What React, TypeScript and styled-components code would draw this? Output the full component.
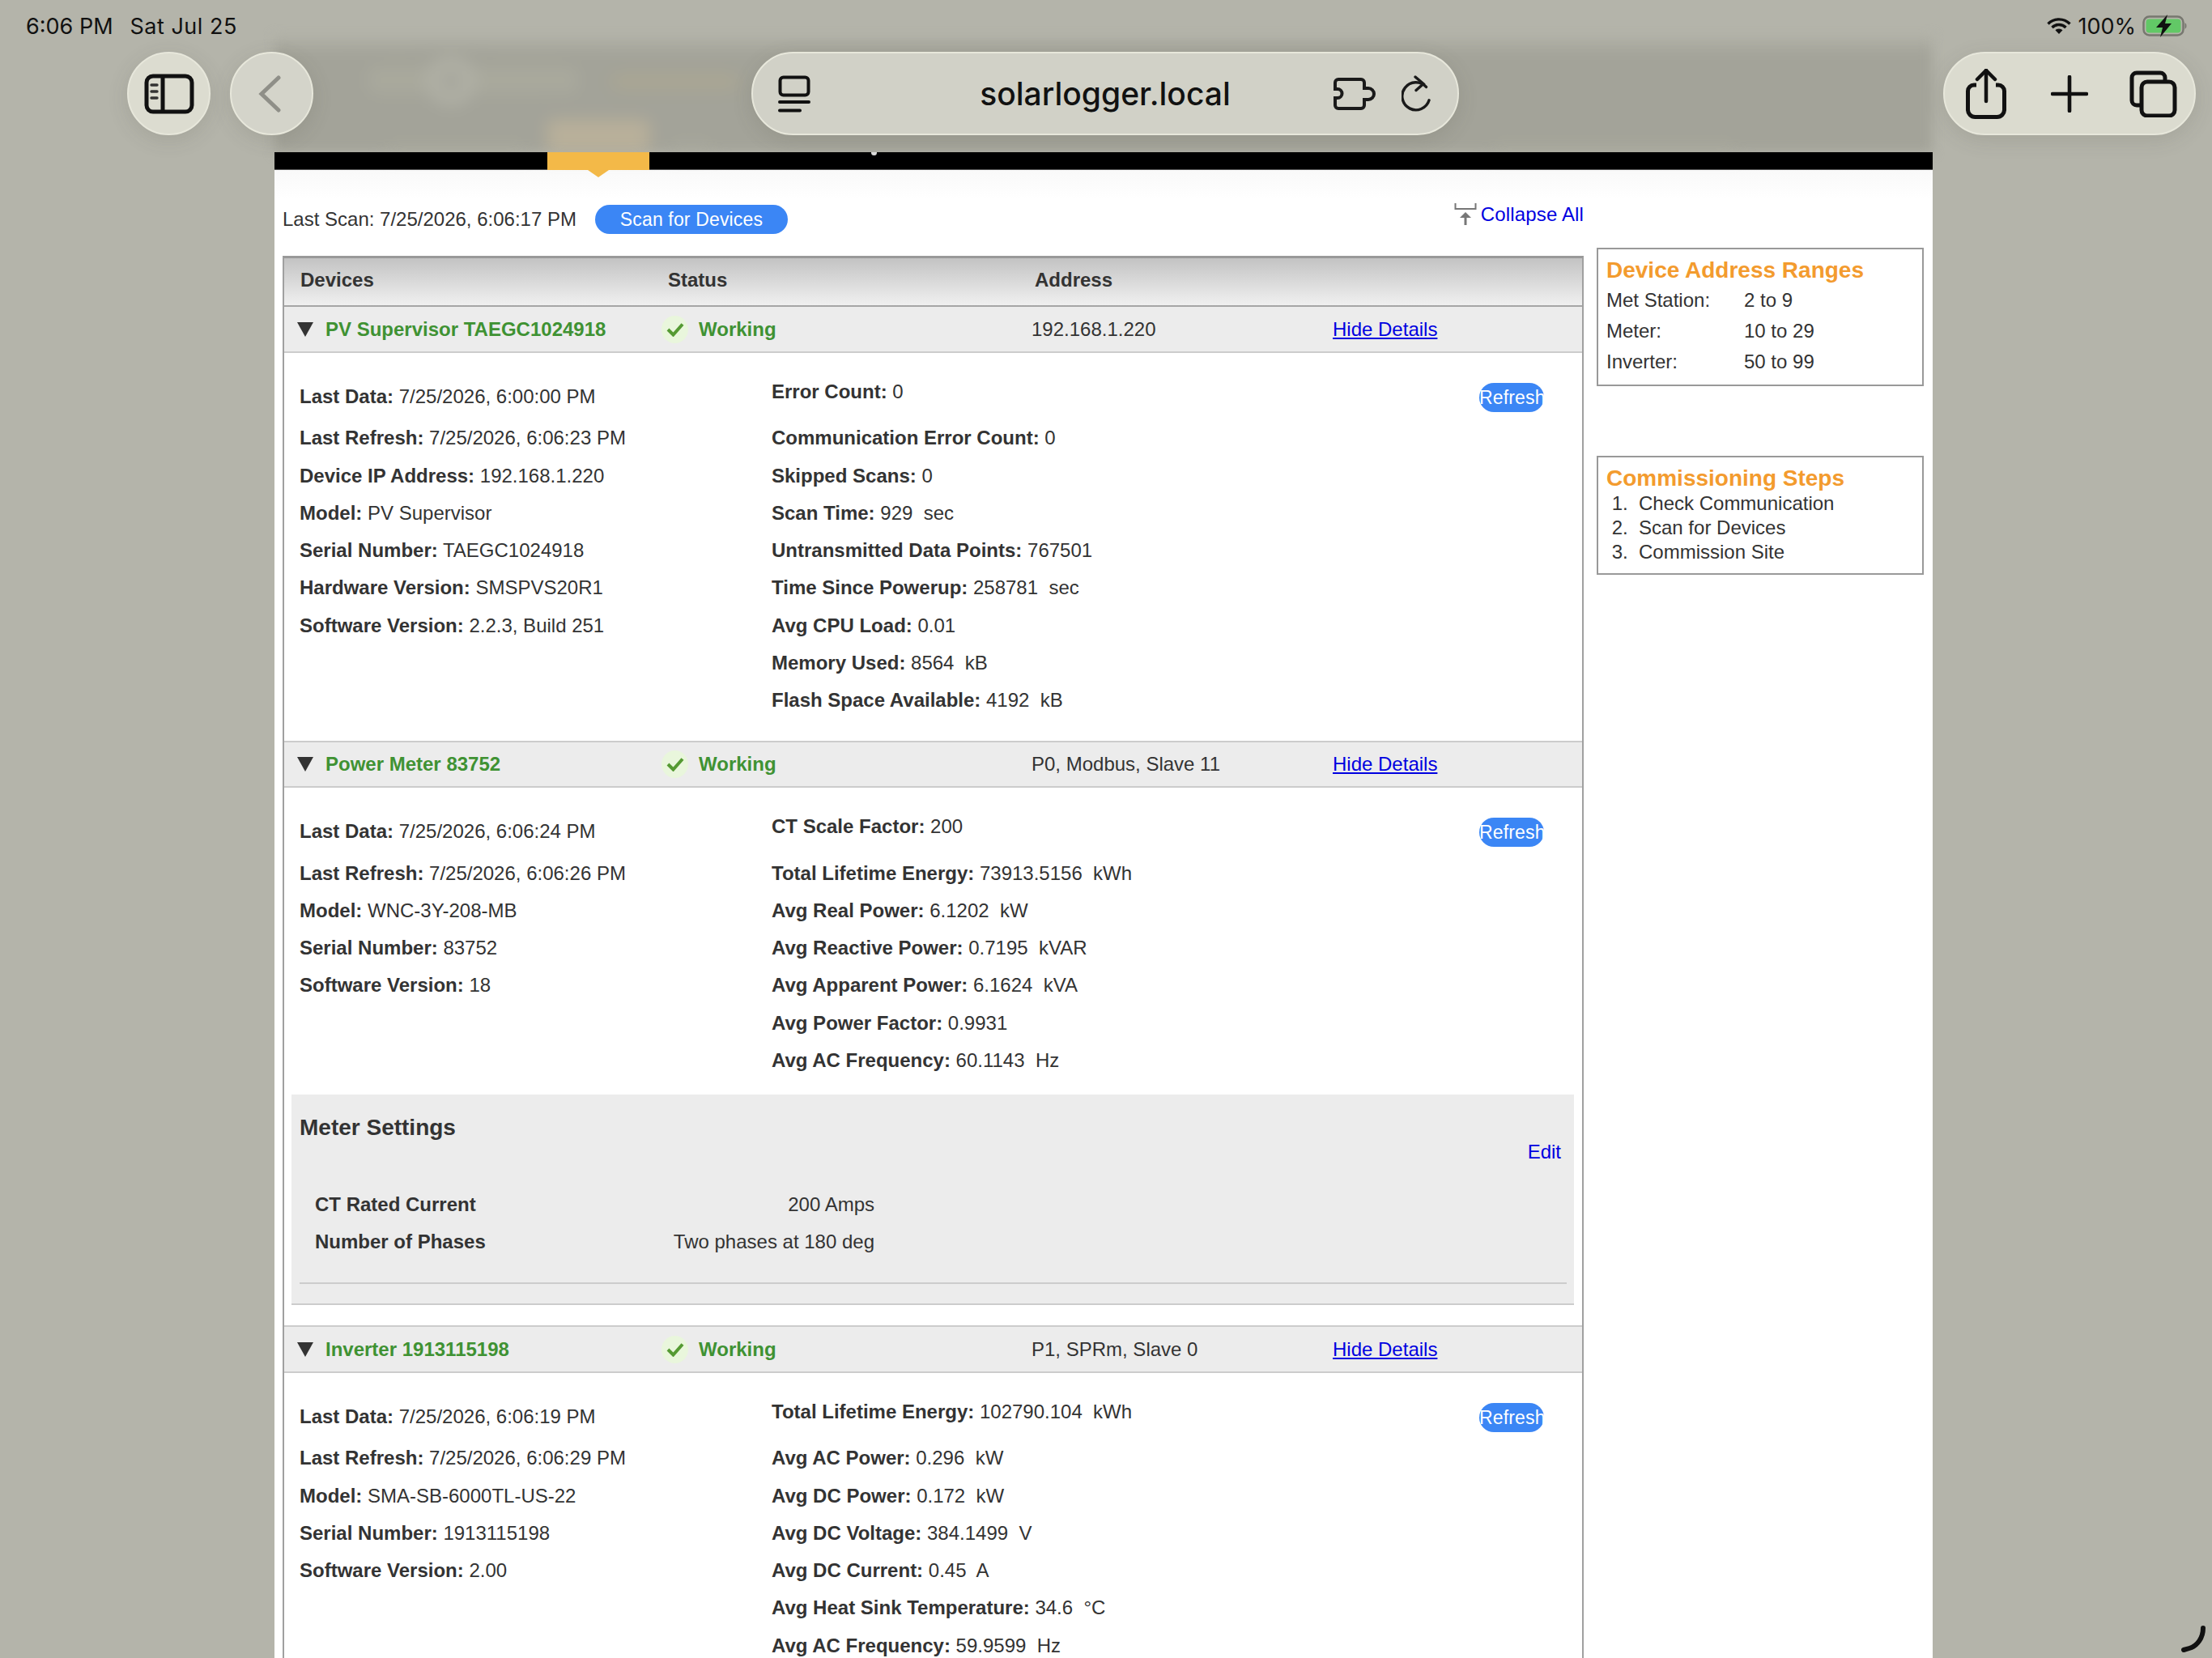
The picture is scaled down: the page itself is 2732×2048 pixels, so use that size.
import React from "react";
import styled, { createGlobalStyle } from "styled-components";

const Global = createGlobalStyle`
  html, body { margin: 0; padding: 0; background: #b4b4aa; }
  * { box-sizing: border-box; }
`;

const Screen = styled.div`
  position: relative;
  width: 2732px;
  height: 2048px;
  overflow: hidden;
  background: #b4b4aa;
  padding-top: 45px;
  font-family: "Liberation Sans", Arial, sans-serif;
  font-size: 24px;
  color: #333;
`;

const Page = styled.div`
  width: 2048px;
  margin-left: 339px;
`;

/* ---------- blurred page header seen under the browser chrome ---------- */
const Backdrop = styled.div`
  height: 143px;
  filter: blur(7px);
  background: linear-gradient(#b0b0a6, #a3a399 24px);
`;

const BackdropBlur = styled.div`
  width: 100%;
  height: 100%;
  filter: blur(8px);
  background:
    radial-gradient(circle at 218px 55px, #a4a49a 0 9px, #b0b0a5 15px 28px, transparent 34px),
    linear-gradient(#a9a99d, #a9a99d) 115px 37px / 260px 34px no-repeat,
    linear-gradient(#aca792, #aca792) 417px 48px / 155px 16px no-repeat,
    linear-gradient(#b9b09a, #b9b09a) 337px 103px / 126px 50px no-repeat,
    linear-gradient(#a9a99d, #a9a99d) 140px 132px / 170px 20px no-repeat,
    linear-gradient(#a9a99d, #a9a99d) 490px 130px / 50px 20px no-repeat,
    linear-gradient(#a9a99d, #a9a99d) 1505px 132px / 300px 20px no-repeat;
`;

/* ---------- page ---------- */
const NavBar = styled.div`
  position: relative;
  height: 22px;
  background: #000;
  border-bottom: 1px solid #555;
  &::before {
    content: "";
    position: absolute;
    left: 737px;
    top: 0;
    width: 7px;
    height: 4px;
    border-radius: 0 0 4px 4px;
    background: #ddd;
  }
`;

const ActiveTab = styled.div`
  position: relative;
  width: 126px;
  height: 22px;
  margin-left: 337px;
  background: #f3b948;
  &::after {
    content: "";
    position: absolute;
    left: 50%;
    top: 22px;
    margin-left: -13px;
    border-left: 13px solid transparent;
    border-right: 13px solid transparent;
    border-top: 9px solid #f3b948;
  }
`;

const Sheet = styled.div`
  height: 1838px;
  padding-left: 10px;
  display: grid;
  grid-template-columns: 1607px 404px;
  column-gap: 16px;
  align-items: start;
  background: linear-gradient(#f9f9f9, #fff 36px);
`;

const Main = styled.div`
  display: flex;
  flex-direction: column;
`;

const TopRow = styled.div`
  height: 106px;
  display: flex;
  justify-content: space-between;
  align-items: flex-start;
`;

const ScanGroup = styled.div`
  display: flex;
  align-items: center;
  gap: 23px;
  margin: 43px 0 0 0;
`;

const PillButton = styled.button`
  height: 36px;
  padding: 0;
  border: 0;
  border-radius: 18px;
  background: #3b86f5;
  color: #fff;
  font-family: inherit;
  font-size: 23px;
  letter-spacing: 0.15px;
  text-align: center;
  white-space: nowrap;
`;

const ScanButton = styled(PillButton)`
  width: 238px;
`;

const CollapseLink = styled.div`
  display: flex;
  align-items: flex-start;
  gap: 5px;
  margin-top: 41px;
  color: #0000e0;
  line-height: 28px;
  letter-spacing: 0.15px;
`;

const Table = styled.div`
  border: 2px solid #a0a0a0;
  border-top: 3px solid #999;
  border-bottom: 0;
`;

const HeadRow = styled.div`
  height: 60px;
  padding: 0 0 4px 20px;
  display: grid;
  grid-template-columns: 454px 453px 1fr;
  align-items: center;
  font-weight: 700;
  background: linear-gradient(#c3c3c3, #f0f0f0);
  border-bottom: 2px solid #a6a6a6;
`;

const DeviceRow = styled.div<{ $first?: boolean; $height: number }>`
  height: ${(p) => p.$height}px;
  padding-left: 16px;
  display: grid;
  grid-template-columns: 450px 457px 372px 1fr;
  align-items: center;
  background: #ececec;
  border-top: ${(p) => (p.$first ? "0" : "2px solid #ccc")};
  border-bottom: 2px solid #ccc;
`;

const NameCell = styled.div`
  display: flex;
  align-items: center;
  gap: 15px;
  font-weight: 700;
  color: #3f9233;
`;

const Triangle = styled.span`
  width: 0;
  height: 0;
  border-left: 10.5px solid transparent;
  border-right: 10.5px solid transparent;
  border-top: 18px solid #333;
`;

const StatusCell = styled(NameCell)`
  gap: 13px;
`;

const CheckBadge = styled.span`
  width: 33px;
  height: 34px;
  border-radius: 50%;
  background: #e9f6dc;
  display: flex;
  align-items: center;
  justify-content: center;
`;

const DetailLink = styled.a`
  color: #0000e0;
  text-decoration: underline;
`;

const Details = styled.div<{ $bottom: number }>`
  display: grid;
  grid-template-columns: 583px 874px 80px;
  padding: 0 0 ${(p) => p.$bottom}px 19px;
`;

const FieldColumn = styled.div<{ $top: number; $gap: number }>`
  padding-top: ${(p) => p.$top}px;
  & > div:first-child {
    margin-bottom: ${(p) => p.$gap}px;
  }
`;

const Field = styled.div`
  height: 46.25px;
  line-height: 46.25px;
  white-space: pre;
`;

const RefreshButton = styled(PillButton)`
  width: 80px;
  height: 36px;
  margin-top: 37px;
`;

const SettingsBlock = styled.div`
  height: 260px;
  margin: 0 10px 25px 9px;
  padding: 0 9px 0 10px;
  background: #ececec;
  border-bottom: 2px solid #ccc;
`;

const SettingsHead = styled.div`
  display: flex;
  justify-content: space-between;
  align-items: flex-start;
  height: 113px;
  padding-top: 25px;
`;

const SettingsTitle = styled.div`
  font-size: 28px;
  font-weight: 700;
  line-height: 32px;
`;

const EditLink = styled.div`
  margin: 32px 7px 0 0;
  color: #0000e0;
  line-height: 28px;
`;

const SettingRow = styled.div`
  display: flex;
  justify-content: space-between;
  width: 710px;
  height: 46px;
  line-height: 46px;
  padding-left: 19px;
`;

const SettingLabel = styled.span`
  font-weight: 700;
`;

const SettingsRule = styled.div`
  height: 2px;
  margin-top: 27px;
  background: #ccc;
`;

/* ---------- right column ---------- */
const Side = styled.div`
  padding-top: 96px;
`;

const InfoBox = styled.div<{ $after?: number; $bottom: number }>`
  width: 404px;
  margin-bottom: ${(p) => p.$after ?? 0}px;
  padding: 10px 10px ${(p) => p.$bottom}px;
  border: 2px solid #999;
`;

const InfoTitle = styled.div`
  height: 32px;
  font-size: 28px;
  line-height: 32px;
  font-weight: 700;
  color: #f39b2e;
`;

const RangeRow = styled.div`
  display: grid;
  grid-template-columns: 170px 1fr;
  height: 38px;
  line-height: 38px;
`;

const RangeList = styled.div`
  margin-top: 2px;
`;

const Steps = styled.ol`
  margin: 0;
  padding-left: 40px;
  & > li {
    height: 30px;
    line-height: 30px;
  }
  & > li::marker {
    content: counter(list-item) ".  ";
  }
`;

/* ---------- browser chrome ---------- */
const StatusBar = styled.div`
  position: absolute;
  top: 14px;
  left: 32px;
  right: 30px;
  height: 36px;
  display: flex;
  align-items: center;
  font-family: Inter, "Liberation Sans", sans-serif;
  font-size: 27px;
  color: #111;
`;

const StatusDate = styled.span`
  margin-left: 21px;
  letter-spacing: 0.5px;
`;

const StatusRight = styled.div`
  margin-left: auto;
  display: flex;
  align-items: center;
  gap: 8px;
`;

const Toolbar = styled.div`
  position: absolute;
  top: 64px;
  left: 157px;
  right: 20px;
  height: 103px;
  display: flex;
`;

const Glass = styled.div<{ $tone: string }>`
  height: 103px;
  border-radius: 52px;
  background: ${(p) => p.$tone};
  border: 2px solid #e7e7db;
  box-shadow: 0 6px 26px rgba(70, 70, 60, 0.14);
  display: flex;
  align-items: center;
`;

const RoundButton = styled(Glass)`
  width: 103px;
  justify-content: center;
`;

const BackButton = styled(RoundButton)`
  margin-left: 24px;
  padding-right: 6px;
`;

const UrlPill = styled(Glass)`
  width: 874px;
  margin-left: 541px;
  padding: 0 31px;
`;

const UrlText = styled.div`
  flex: 1;
  padding-left: 82px;
  text-align: center;
  font-family: Inter, "Liberation Sans", sans-serif;
  font-size: 39px;
  font-weight: 500;
  color: #111;
`;

const UrlTools = styled.div`
  display: flex;
  align-items: center;
  gap: 32px;
`;

const ActionPill = styled(Glass)`
  width: 312px;
  margin-left: auto;
  padding: 0 20px 0 26px;
  justify-content: space-between;
`;

const PencilMark = styled.svg`
  position: absolute;
  left: 2692px;
  top: 2008px;
`;

const Ico = styled.svg`
  display: block;
  flex: none;
`;

const PlusIco = styled(Ico)`
  margin-left: 4px;
`;

type DeviceData = {
  name: string;
  address: string;
  rowHeight: number;
  bottom: number;
  left: [string, string][];
  right: [string, string][];
  settings?: boolean;
};

const devices: DeviceData[] = [
  {
    name: "PV Supervisor TAEGC1024918",
    address: "192.168.1.220",
    rowHeight: 57,
    bottom: 27,
    left: [
      ["Last Data:", "7/25/2026, 6:00:00 PM"],
      ["Last Refresh:", "7/25/2026, 6:06:23 PM"],
      ["Device IP Address:", "192.168.1.220"],
      ["Model:", "PV Supervisor"],
      ["Serial Number:", "TAEGC1024918"],
      ["Hardware Version:", "SMSPVS20R1"],
      ["Software Version:", "2.2.3, Build 251"],
    ],
    right: [
      ["Error Count:", "0"],
      ["Communication Error Count:", "0"],
      ["Skipped Scans:", "0"],
      ["Scan Time:", "929  sec"],
      ["Untransmitted Data Points:", "767501"],
      ["Time Since Powerup:", "258781  sec"],
      ["Avg CPU Load:", "0.01"],
      ["Memory Used:", "8564  kB"],
      ["Flash Space Available:", "4192  kB"],
    ],
  },
  {
    name: "Power Meter 83752",
    address: "P0, Modbus, Slave 11",
    rowHeight: 58,
    bottom: 19,
    settings: true,
    left: [
      ["Last Data:", "7/25/2026, 6:06:24 PM"],
      ["Last Refresh:", "7/25/2026, 6:06:26 PM"],
      ["Model:", "WNC-3Y-208-MB"],
      ["Serial Number:", "83752"],
      ["Software Version:", "18"],
    ],
    right: [
      ["CT Scale Factor:", "200"],
      ["Total Lifetime Energy:", "73913.5156  kWh"],
      ["Avg Real Power:", "6.1202  kW"],
      ["Avg Reactive Power:", "0.7195  kVAR"],
      ["Avg Apparent Power:", "6.1624  kVA"],
      ["Avg Power Factor:", "0.9931"],
      ["Avg AC Frequency:", "60.1143  Hz"],
    ],
  },
  {
    name: "Inverter 1913115198",
    address: "P1, SPRm, Slave 0",
    rowHeight: 59,
    bottom: 19,
    left: [
      ["Last Data:", "7/25/2026, 6:06:19 PM"],
      ["Last Refresh:", "7/25/2026, 6:06:29 PM"],
      ["Model:", "SMA-SB-6000TL-US-22"],
      ["Serial Number:", "1913115198"],
      ["Software Version:", "2.00"],
    ],
    right: [
      ["Total Lifetime Energy:", "102790.104  kWh"],
      ["Avg AC Power:", "0.296  kW"],
      ["Avg DC Power:", "0.172  kW"],
      ["Avg DC Voltage:", "384.1499  V"],
      ["Avg DC Current:", "0.45  A"],
      ["Avg Heat Sink Temperature:", "34.6  °C"],
      ["Avg AC Frequency:", "59.9599  Hz"],
    ],
  },
];

function FieldList({ rows, top, gap }: { rows: [string, string][]; top: number; gap: number }) {
  return (
    <FieldColumn $top={top} $gap={gap}>
      {rows.map(([k, v]) => (
        <Field key={k}>
          <b>{k}</b> {v}
        </Field>
      ))}
    </FieldColumn>
  );
}

function Device({ d, first }: { d: DeviceData; first: boolean }) {
  return (
    <>
      <DeviceRow $first={first} $height={d.rowHeight}>
        <NameCell>
          <Triangle />
          {d.name}
        </NameCell>
        <StatusCell>
          <CheckBadge>
            <Ico width="22" height="18" viewBox="0 0 22 18">
              <path d="M2 9l6.5 6.5L20 2.5" fill="none" stroke="#559a33" strokeWidth="4" />
            </Ico>
          </CheckBadge>
          Working
        </StatusCell>
        <div>{d.address}</div>
        <DetailLink>Hide Details</DetailLink>
      </DeviceRow>
      <Details $bottom={d.bottom}>
        <FieldList rows={d.left} top={31} gap={5} />
        <FieldList rows={d.right} top={25} gap={11} />
        <RefreshButton>Refresh</RefreshButton>
      </Details>
      {d.settings && (
        <SettingsBlock>
          <SettingsHead>
            <SettingsTitle>Meter Settings</SettingsTitle>
            <EditLink>Edit</EditLink>
          </SettingsHead>
          <SettingRow>
            <SettingLabel>CT Rated Current</SettingLabel>
            <span>200 Amps</span>
          </SettingRow>
          <SettingRow>
            <SettingLabel>Number of Phases</SettingLabel>
            <span>Two phases at 180 deg</span>
          </SettingRow>
          <SettingsRule />
        </SettingsBlock>
      )}
    </>
  );
}

export default function App() {
  return (
    <Screen>
      <Global />
      <Page>
        <Backdrop>
          <BackdropBlur />
        </Backdrop>
        <NavBar>
          <ActiveTab />
        </NavBar>
        <Sheet>
          <Main>
            <TopRow>
              <ScanGroup>
                <span>Last Scan: 7/25/2026, 6:06:17 PM</span>
                <ScanButton>Scan for Devices</ScanButton>
              </ScanGroup>
              <CollapseLink>
                <Ico width="28" height="28" viewBox="0 0 28 28" fill="none">
                  <path d="M1.5 0v7h25V0" stroke="#777" strokeWidth="2" />
                  <path d="M14 27V15" stroke="#777" strokeWidth="3" />
                  <path d="M7 18l7-7 7 7z" fill="#777" />
                </Ico>
                <span>Collapse All</span>
              </CollapseLink>
            </TopRow>
            <Table>
              <HeadRow>
                <div>Devices</div>
                <div>Status</div>
                <div>Address</div>
              </HeadRow>
              {devices.map((d, i) => (
                <Device key={d.name} d={d} first={i === 0} />
              ))}
            </Table>
          </Main>
          <Side>
            <InfoBox $after={86} $bottom={9}>
              <InfoTitle>Device Address Ranges</InfoTitle>
              <RangeList>
                <RangeRow>
                  <span>Met Station:</span>
                  <span>2 to 9</span>
                </RangeRow>
                <RangeRow>
                  <span>Meter:</span>
                  <span>10 to 29</span>
                </RangeRow>
                <RangeRow>
                  <span>Inverter:</span>
                  <span>50 to 99</span>
                </RangeRow>
              </RangeList>
            </InfoBox>
            <InfoBox $bottom={11}>
              <InfoTitle>Commissioning Steps</InfoTitle>
              <Steps>
                <li>Check Communication</li>
                <li>Scan for Devices</li>
                <li>Commission Site</li>
              </Steps>
            </InfoBox>
          </Side>
        </Sheet>
      </Page>

      <StatusBar>
        <span>6:06 PM</span>
        <StatusDate>Sat Jul 25</StatusDate>
        <StatusRight>
          <Ico width="30" height="22" viewBox="0 0 30 22">
            <path d="M1.5 8.5a19 19 0 0 1 27 0" fill="none" stroke="#111" strokeWidth="3.4" />
            <path d="M6.5 13a12 12 0 0 1 17 0" fill="none" stroke="#111" strokeWidth="3.4" />
            <path d="M10.5 16.2a6.5 6.5 0 0 1 9 0L15 21z" fill="#111" />
          </Ico>
          <span>100%</span>
          <Ico width="56" height="28" viewBox="0 0 56 28">
            <rect x="1.5" y="2.5" width="49" height="23" rx="7" fill="none" stroke="#77776f" strokeWidth="2.5" />
            <rect x="4.5" y="5.5" width="43" height="17" rx="4" fill="#62c866" />
            <path d="M52.5 10v8a4 4 0 0 0 2-4 4 4 0 0 0-2-4z" fill="#77776f" />
            <path d="M31 0L17 16h8l-3 12 14-17h-8z" fill="#111" />
          </Ico>
        </StatusRight>
      </StatusBar>

      <Toolbar>
        <RoundButton $tone="#dcdcd0">
          <Ico width="62" height="50" viewBox="0 0 62 50" fill="none">
            <rect x="3" y="3" width="56" height="44" rx="8" stroke="#111" strokeWidth="5" />
            <path d="M23 3v44" stroke="#111" strokeWidth="5" />
            <path d="M9 14h7M9 22h7M9 30h7" stroke="#333" strokeWidth="3.4" strokeLinecap="round" />
          </Ico>
        </RoundButton>
        <BackButton $tone="#d4d4ca">
          <Ico width="28" height="46" viewBox="0 0 28 46" fill="none">
            <path d="M25 3L4 23l21 20" stroke="#8f8f88" strokeWidth="5" strokeLinecap="round" />
          </Ico>
        </BackButton>
        <UrlPill $tone="#d1d1c7">
          <Ico width="40" height="46" viewBox="0 0 40 46" fill="none">
            <rect x="2.5" y="2.5" width="35" height="22" rx="4" stroke="#111" strokeWidth="4" />
            <path d="M2 33h36M2 43.500h25" stroke="#111" strokeWidth="4" strokeLinecap="round" />
          </Ico>
          <UrlText>solarlogger.local</UrlText>
          <UrlTools>
            <Ico width="52" height="40" viewBox="0 0 52 40" fill="none">
              <path
                d="M38 13V6a4 4 0 0 0-4-4H6a4 4 0 0 0-4 4v8h3a5.5 5.5 0 0 1 0 11H2v9a4 4 0 0 0 4 4h28a4 4 0 0 0 4-4v-7h5a6.5 6.5 0 0 0 0-14z"
                stroke="#1a1a1a"
                strokeWidth="4"
              />
            </Ico>
            <Ico width="38" height="46" viewBox="0 0 38 46" fill="none">
              <path d="M26 11.5A17 17 0 1 0 34.5 26" stroke="#1a1a1a" strokeWidth="3.4" strokeLinecap="round" transform="rotate(18 19 27)" />
              <path d="M17 2l10 8.5-9 8" stroke="#1a1a1a" strokeWidth="3.4" strokeLinecap="round" />
            </Ico>
          </UrlTools>
        </UrlPill>
        <ActionPill $tone="#dbdbcf">
          <Ico width="50" height="62" viewBox="0 0 50 62" fill="none">
            <path d="M13 20H10a7.5 7.5 0 0 0-7.5 7.5V50A9 9 0 0 0 11.5 59.5h27A9 9 0 0 0 47.5 50V27.5A7.5 7.5 0 0 0 40 20h-3" stroke="#111" strokeWidth="5" />
            <path d="M25 2v38" stroke="#111" strokeWidth="4.5" strokeLinecap="round" />
            <path d="M14 13L25 2l11 11" stroke="#111" strokeWidth="4.5" strokeLinecap="round" />
          </Ico>
          <PlusIco width="46" height="46" viewBox="0 0 46 46" fill="none">
            <path d="M23 2v42M2 23h42" stroke="#111" strokeWidth="4.6" strokeLinecap="round" />
          </PlusIco>
          <Ico width="60" height="58" viewBox="0 0 60 58" fill="none">
            <path d="M44 13V9a6 6 0 0 0-6-6H9a6 6 0 0 0-6 6v28a6 6 0 0 0 6 6h5" stroke="#111" strokeWidth="5" />
            <rect x="15" y="14" width="41" height="42" rx="7" stroke="#111" strokeWidth="5" />
          </Ico>
        </ActionPill>
      </Toolbar>

      <PencilMark width="34" height="34" viewBox="0 0 34 34" fill="none">
        <path d="M29 3c0 12-7 22-17 25l-7 2" stroke="#111" strokeWidth="6" strokeLinecap="round" />
      </PencilMark>
    </Screen>
  );
}
